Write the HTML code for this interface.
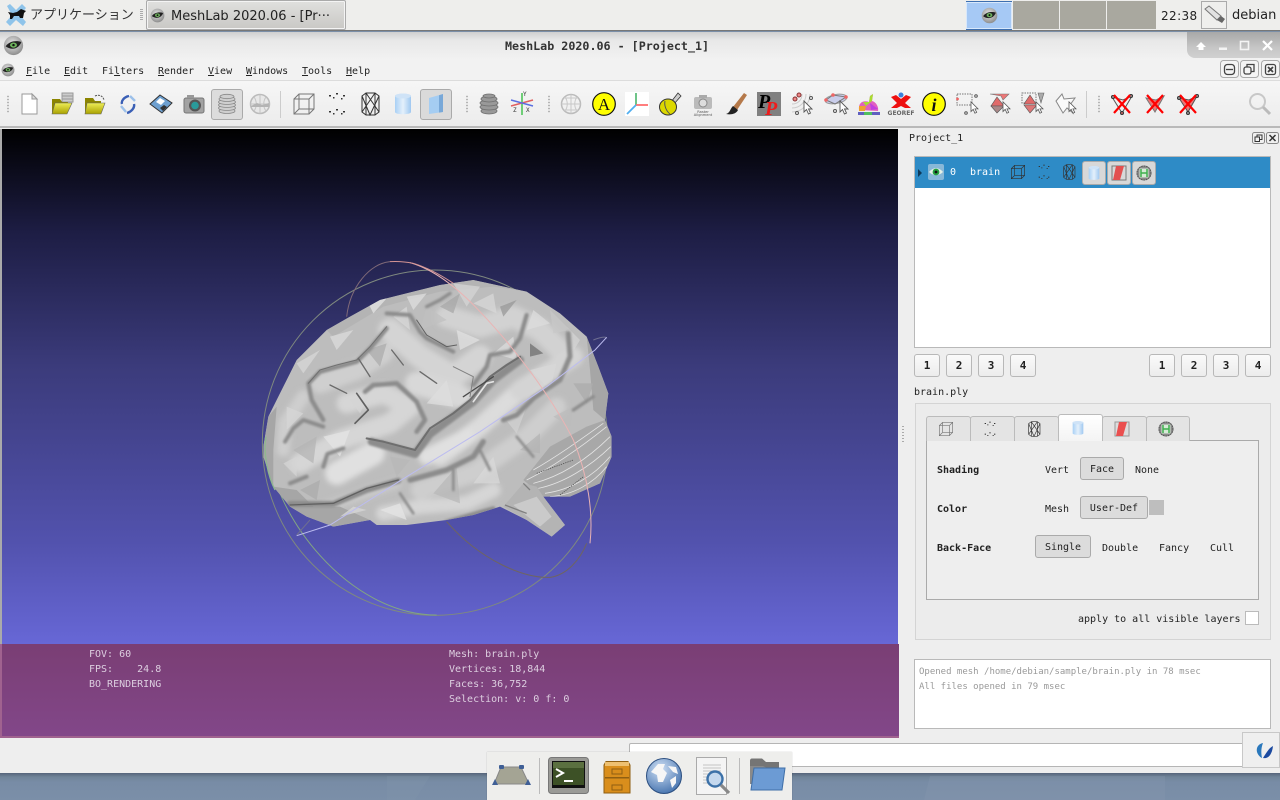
<!DOCTYPE html>
<html><head><meta charset="utf-8">
<style>
html,body{margin:0;padding:0;width:1280px;height:800px;overflow:hidden;background:#7b8fa8}
*{box-sizing:border-box}
.a{position:absolute}
.t{position:absolute;font:10px/12px "DejaVu Sans Mono","Liberation Mono",monospace;color:#222;white-space:pre}
.u{text-decoration:underline}
.b{font-weight:bold}
.btn{position:absolute;background:linear-gradient(#fafafa,#ececec);border:1px solid #b8b8b8;border-radius:3px;text-align:center;font:bold 11px/22px "DejaVu Sans Mono",monospace;color:#222}
.on{position:absolute;background:#dcdcdc;border:1px solid #aaa;border-radius:3px;text-align:center;font:10px/24px "DejaVu Sans Mono",monospace;color:#222}
.tab{position:absolute;top:416px;height:25px;background:#e4e4e4;border:1px solid #bbb;border-bottom:none;border-radius:3px 3px 0 0}
svg{position:absolute;overflow:visible}
.ic{width:24px;height:24px;top:92px}
</style></head><body>
<svg width="0" height="0" style="position:absolute">
<defs>
<radialGradient id="eg" cx=".45" cy=".4" r=".6"><stop offset="0" stop-color="#e8e8e8"/><stop offset="1" stop-color="#8e8e8e"/></radialGradient>
<linearGradient id="cy" x1="0" x2="1"><stop offset="0" stop-color="#a9d0f5"/><stop offset=".5" stop-color="#e4f0fb"/><stop offset="1" stop-color="#9fc8f0"/></linearGradient>
<linearGradient id="fo" x1="0" y1="0" x2="0" y2="1"><stop offset="0" stop-color="#eeee55"/><stop offset="1" stop-color="#a8a000"/></linearGradient>
<filter id="bl8" x="-10%" y="-10%" width="120%" height="120%"><feGaussianBlur stdDeviation="8"/></filter>
<filter id="bl3" x="-10%" y="-10%" width="120%" height="120%"><feGaussianBlur stdDeviation="3"/></filter>
<filter id="bl1" x="-10%" y="-10%" width="120%" height="120%"><feGaussianBlur stdDeviation="1"/></filter>
<symbol id="eye" viewBox="0 0 24 24"><circle cx="12" cy="12" r="11" fill="url(#eg)"/><path d="M3 13C7 7 15 6 21 8 18 16 10 18 3 13z" fill="#222"/><ellipse cx="12" cy="11.5" rx="4" ry="3" fill="#6cb05c"/><circle cx="12" cy="11.5" r="1.4" fill="#111"/></symbol>
<symbol id="cube" viewBox="0 0 24 24"><path d="M2 7H17V22H2zM2 7L7 2H22V17L17 22M17 7L22 2M7 2V17H22M7 17L2 22" fill="none" stroke="#777" stroke-width="1"/></symbol>
<symbol id="pts" viewBox="0 0 24 24"><g fill="#333"><rect x="4" y="3" width="2" height="1.5"/><rect x="11" y="1" width="2" height="1.5"/><rect x="18" y="3" width="2" height="1.5"/><rect x="8" y="5" width="1.5" height="1.5"/><rect x="16" y="6" width="1.5" height="1.5"/><rect x="4" y="19" width="2" height="1.5"/><rect x="11" y="17" width="2" height="1.5"/><rect x="18" y="19" width="2" height="1.5"/><rect x="8" y="21" width="1.5" height="1.5"/><rect x="16" y="21" width="1.5" height="1.5"/></g></symbol>
<symbol id="wire" viewBox="0 0 24 24"><path d="M4 4L8 1H17L21 4V20L17 23H8L4 20zM4 4L12 23 21 4M8 1L8 23M17 1L17 23M4 20L17 1M21 20L8 1" fill="none" stroke="#333" stroke-width="1"/></symbol>
<symbol id="cyl" viewBox="0 0 24 24"><path d="M4 4C4 1 20 1 20 4V20C20 23 4 23 4 20z" fill="url(#cy)"/><ellipse cx="12" cy="4" rx="8" ry="2.500" fill="#cfe3f7"/></symbol>
<symbol id="cur" viewBox="0 0 10 16"><path d="M1 1V12L3.5 9.5 5.5 14 7.5 13 5.5 9H9z" fill="#fff" stroke="#555" stroke-width=".9"/></symbol>
<symbol id="xm" viewBox="0 0 24 24"><path d="M4 3L20 21M20 3L4 21" stroke="#f00" stroke-width="2.2" fill="none"/></symbol>
<symbol id="tex" viewBox="0 0 16 16"><circle cx="8" cy="8" r="7.500" fill="#8a8a8a"/><circle cx="8" cy="8" r="7" fill="none" stroke="#555" stroke-dasharray="1.500 1"/><rect x="3.500" y="3.500" width="9" height="9" fill="#d6ead6"/><path d="M5 4V12M11 4V12M5 8H11" stroke="#3fb04f" stroke-width="1.500"/></symbol>
</defs></svg>

<!-- desktop -->
<div class="a" style="left:0;top:773px;width:1280px;height:27px;background:linear-gradient(#56647a 0,#708499 4px,#788ca6 9px,#7b8fa8 100%)"></div>
<svg style="left:0;top:776px" width="1280" height="24"><path d="M930 0H1165V24H924z" fill="#8899b0" opacity=".3"/><path d="M387 0H430L415 24H387z" fill="#8899b0" opacity=".2"/></svg>

<!-- taskbar -->
<div class="a" style="left:0;top:0;width:1280px;height:31px;background:#eeeeec;border-bottom:1px solid #777"></div>
<svg style="left:4px;top:3px" width="24" height="24" viewBox="0 0 24 24"><path d="M3 3L6 1 12 7 18 1 22 5 16 12 22 19 19 23 12 17 6 23 2 19 8 12z" fill="#8fc4ea"/><path d="M4 9L9 10 13 9 17 6 22 8 20 10 19 15 16 15 15 13 10 13 8 16 6 16 6 12z" fill="#111"/></svg>
<div class="t" style="left:30px;top:7px;font:13px/16px 'Liberation Sans','Noto Sans CJK JP',sans-serif;color:#333;">アプリケーション</div>
<div class="a" style="left:140px;top:9px;width:3px;height:12px;background:repeating-linear-gradient(#aaa 0 1px,transparent 1px 2px)"></div>
<div class="a" style="left:146px;top:0;width:200px;height:30px;background:linear-gradient(#e0e0de,#c9c8c5);border:1px solid #aaa;border-radius:2px;box-shadow:inset 0 0 0 1px #f4f4f4"></div>
<svg style="left:150px;top:8px" width="15" height="15"><use href="#eye"/></svg>
<div class="t" style="left:171px;top:9px;font:13px/16px 'DejaVu Sans',sans-serif;color:#222">MeshLab 2020.06 - [Pr···</div>
<div class="a" style="left:966px;top:1px;width:46px;height:29px;background:#a6c9f5;border-top:1px solid #3d6fb0;border-bottom:1px solid #3d6fb0;box-shadow:inset 0 0 0 1px #d8e8fb"></div>
<svg style="left:981px;top:7px" width="17" height="17"><use href="#eye"/></svg>
<div class="a" style="left:1013px;top:1px;width:46px;height:28px;background:#a9a89f"></div>
<div class="a" style="left:1060px;top:1px;width:46px;height:28px;background:#a9a89f"></div>
<div class="a" style="left:1107px;top:1px;width:49px;height:28px;background:#a9a89f"></div>
<div class="t" style="left:1161px;top:9px;font:12px/15px 'DejaVu Sans',sans-serif;letter-spacing:.4px">22:38</div>
<div class="a" style="left:1201px;top:1px;width:26px;height:28px;border:1px solid #aaa;background:#efefed"></div>
<svg style="left:1203px;top:4px" width="23" height="22" viewBox="0 0 23 22"><path d="M2 5L6 2 18 12 14 16z" fill="#e2e2e2" stroke="#777"/><path d="M14 16L18 12 22 15 19 19z" fill="#666"/></svg>
<div class="t" style="left:1232px;top:8px;font:13px/16px 'DejaVu Sans',sans-serif;color:#222">debian</div>

<!-- window -->
<div class="a" style="left:0;top:32px;width:1280px;height:741px;background:#eeeeee"></div>
<div class="a" style="left:0;top:32px;width:1280px;height:28px;background:linear-gradient(#cfcfcf 0,#e8e8e8 8px,#f2f2f2 100%)"></div>
<svg style="left:3px;top:35px" width="21" height="21"><use href="#eye"/></svg>
<div class="t b" style="left:505px;top:39px;font:bold 11.7px/14px 'DejaVu Sans Mono',monospace;color:#333;letter-spacing:0">MeshLab 2020.06 - [Project_1]</div>
<div class="a" style="left:1187px;top:32px;width:93px;height:26px;background:linear-gradient(#a8a8a8,#c6c6c6 60%,#d0d0d0);border-radius:0 0 0 8px"></div>
<svg style="left:1186px;top:32px" width="94" height="26"><path d="M15 10L20 15H17.500V18H12.500V15H10z" fill="#fff"/><rect x="33" y="15.500" width="8" height="2.500" fill="#f4f4f4"/><rect x="54.500" y="9.500" width="8" height="8" fill="none" stroke="#f4f4f4" stroke-width="1.600"/><path d="M77 9L86 18M86 9L77 18" stroke="#fff" stroke-width="2.200"/></svg>

<!-- MDI buttons -->
<svg style="left:1220px;top:60px;z-index:1" width="60" height="19" viewBox="0 0 60 19"><g fill="#f4f4f4" stroke="#aaa"><rect x=".5" y=".5" width="18" height="17" rx="3"/><rect x="20.500" y=".5" width="18" height="17" rx="3"/><rect x="41.500" y=".5" width="18" height="17" rx="3"/></g><g fill="none" stroke="#444" stroke-width="1.300"><rect x="4.500" y="4.500" width="10" height="10" rx="3"/><path d="M6 9.500H13"/><rect x="24" y="7" width="7" height="7" rx="2"/><path d="M27 7V4.500H34V11.500H31"/><rect x="45.500" y="4.500" width="10" height="10" rx="2"/><path d="M48 7L53 12M53 7L48 12" stroke-width="1.800"/></g></svg>

<!-- menu -->
<div class="a" style="left:0;top:60px;width:1280px;height:21px;background:#f2f2f2;border-bottom:1px solid #dcdcdc"></div>
<svg style="left:1px;top:63px;z-index:1" width="14" height="14"><use href="#eye"/></svg>
<div class="t" style="left:26px;top:66px"><span class="u">F</span>ile</div>
<div class="t" style="left:64px;top:66px"><span class="u">E</span>dit</div>
<div class="t" style="left:102px;top:66px">Fi<span class="u">l</span>ters</div>
<div class="t" style="left:158px;top:66px"><span class="u">R</span>ender</div>
<div class="t" style="left:208px;top:66px"><span class="u">V</span>iew</div>
<div class="t" style="left:246px;top:66px"><span class="u">W</span>indows</div>
<div class="t" style="left:302px;top:66px"><span class="u">T</span>ools</div>
<div class="t" style="left:346px;top:66px"><span class="u">H</span>elp</div>

<!-- toolbar -->
<div class="a" style="left:0;top:81px;width:1280px;height:47px;background:linear-gradient(#f6f6f6,#ececec);border-bottom:2px solid #b9b9b9"></div>
<div class="a" style="left:6px;top:95px;width:4px;height:18px;background:radial-gradient(circle,#aaa .7px,transparent 1px) 0 0/4px 3px"></div>
<div class="a" style="left:1097px;top:95px;width:4px;height:18px;background:radial-gradient(circle,#aaa .7px,transparent 1px) 0 0/4px 3px"></div>
<div class="a" style="left:465px;top:95px;width:4px;height:18px;background:radial-gradient(circle,#aaa .7px,transparent 1px) 0 0/4px 3px"></div>
<div class="a" style="left:547px;top:95px;width:4px;height:18px;background:radial-gradient(circle,#aaa .7px,transparent 1px) 0 0/4px 3px"></div>
<div class="a" style="left:280px;top:91px;width:1px;height:27px;background:#ccc"></div>
<div class="a" style="left:1086px;top:91px;width:1px;height:27px;background:#ccc"></div>
<div class="on" style="left:211px;top:89px;width:32px;height:31px"></div>
<div class="on" style="left:420px;top:89px;width:32px;height:31px;background:#dadada"></div>

<svg class="ic" style="left:17px" viewBox="0 0 24 24"><path d="M5 2H15L20 7V22H5z" fill="#fff" stroke="#999"/><path d="M15 2V7H20z" fill="#ddd" stroke="#999"/></svg>
<svg class="ic" style="left:50px" viewBox="0 0 24 24"><g fill="#ccc" stroke="#999"><rect x="12" y="1" width="11" height="3"/><rect x="12" y="4" width="11" height="3"/><rect x="12" y="7" width="11" height="3"/></g><path d="M2 7H10L12 10H18L16 22H2z" fill="#8c8500"/><path d="M5 11H22L17 22H2z" fill="url(#fo)" stroke="#666" stroke-width=".6"/></svg>
<svg class="ic" style="left:83px" viewBox="0 0 24 24"><path d="M2 6H10L12 9H18V22H2z" fill="#8c8500"/><path d="M4 11H22L18 22H2z" fill="url(#fo)" stroke="#666" stroke-width=".6"/><path d="M12 4C16 2 20 4 21 8" fill="none" stroke="#555" stroke-dasharray="2 1"/></svg>
<svg class="ic" style="left:116px" viewBox="0 0 24 24"><path d="M6 12C5 9 8 5 13 4" fill="none" stroke="#3a5fb5" stroke-width="2.400"/><path d="M14 4L19 9" stroke="#9cc0ea" stroke-width="2.400"/><path d="M18 12C19 16 15 20 11 21" fill="none" stroke="#3a5fb5" stroke-width="2.400"/><path d="M5 14L10 20" stroke="#9cc0ea" stroke-width="2.400"/></svg>
<svg class="ic" style="left:149px" viewBox="0 0 24 24"><path d="M1 12L11 3 23 11 13 21z" fill="#6ea0d0" stroke="#333"/><path d="M7 10L11 6 16 9 12 13z" fill="#fff"/><path d="M11 16L15 13 18 15 14 19z" fill="#333"/></svg>
<svg class="ic" style="left:182px" viewBox="0 0 24 24"><rect x="2" y="6" width="20" height="15" rx="2" fill="#a2a2a2" stroke="#777"/><rect x="5" y="3" width="7" height="3" fill="#999"/><circle cx="13" cy="13.500" r="6" fill="#555"/><circle cx="13" cy="13.500" r="3.800" fill="#2a9a9a"/></svg>
<svg class="ic" style="left:215px" viewBox="0 0 24 24"><g fill="#cfcfcf" stroke="#888" stroke-width=".8"><ellipse cx="12" cy="19" rx="8" ry="2.500"/><ellipse cx="12" cy="16" rx="8.500" ry="2.500"/><ellipse cx="12" cy="13" rx="8.500" ry="2.500"/><ellipse cx="12" cy="10" rx="8.500" ry="2.500"/><ellipse cx="12" cy="7" rx="8" ry="2.500"/><ellipse cx="12" cy="4.500" rx="7" ry="2.200"/></g></svg>
<svg class="ic" style="left:248px" viewBox="0 0 24 24"><circle cx="12" cy="12" r="9.500" fill="#e8e8e8" stroke="#bbb" stroke-width="1.500"/><path d="M2.500 12H21.500M12 2.500V21.500M6 5C9 9 9 15 6 19M18 5C15 9 15 15 18 19" stroke="#c4c4c4" fill="none"/><path d="M3 14L9 11 14 13 21 11V15H3z" fill="#b4b4b4"/></svg>
<svg class="ic" style="left:292px"><use href="#cube" width="24" height="24"/></svg>
<svg class="ic" style="left:325px"><use href="#pts" width="24" height="24"/></svg>
<svg class="ic" style="left:358px"><use href="#wire" width="24" height="24"/></svg>
<svg class="ic" style="left:391px"><use href="#cyl" width="24" height="24"/></svg>
<svg class="ic" style="left:424px" viewBox="0 0 24 24"><path d="M5 6L19 2V20L5 22z" fill="#a5cdf2"/><path d="M19 2V20L15 20.600V3.200z" fill="#78a8d8"/></svg>
<svg class="ic" style="left:477px" viewBox="0 0 24 24"><g fill="#999" stroke="#6e6e6e" stroke-width=".8"><ellipse cx="12" cy="19" rx="8" ry="3"/><ellipse cx="12" cy="15" rx="9" ry="3"/><ellipse cx="12" cy="11" rx="9" ry="3"/><ellipse cx="12" cy="7" rx="8" ry="3"/><ellipse cx="12" cy="4" rx="6" ry="2"/></g></svg>
<svg class="ic" style="left:510px" viewBox="0 0 24 24"><path d="M12 1V23" stroke="#6fce78" stroke-width="2"/><path d="M1 14L23 8" stroke="#e06060" stroke-width="1.500"/><path d="M1 8L23 14" stroke="#5a6fe0" stroke-width="1.500"/><g fill="#333" font-size="6" font-family="DejaVu Sans Mono"><text x="13" y="4">Y</text><text x="3" y="20">Z</text><text x="16" y="20">X</text></g></svg>
<svg class="ic" style="left:559px" viewBox="0 0 24 24"><circle cx="12" cy="12" r="9.500" fill="none" stroke="#bbb" stroke-width="1.500"/><path d="M2.500 12H21.500M12 2.500V21.500M6 5C9 9 9 15 6 19M18 5C15 9 15 15 18 19M5 6H19M5 18H19" stroke="#c8c8c8" fill="none"/></svg>
<svg class="ic" style="left:592px" viewBox="0 0 24 24"><circle cx="12" cy="12" r="11.300" fill="#ffff00" stroke="#111" stroke-width="1.200"/><text x="12" y="18" text-anchor="middle" font-family="Liberation Serif,serif" font-size="17" fill="#111">A</text></svg>
<svg class="ic" style="left:625px" viewBox="0 0 24 24"><rect width="24" height="24" fill="#fff"/><path d="M11 13V1" stroke="#3fb060" stroke-width="1.500"/><path d="M11 13H23" stroke="#ff7070" stroke-width="1.800"/><path d="M11 13L2 22" stroke="#50aef0" stroke-width="1.800"/></svg>
<svg class="ic" style="left:658px" viewBox="0 0 24 24"><path d="M13 10L20 1 23 4 16 12z" fill="#ccc" stroke="#333" stroke-width=".8"/><ellipse cx="10" cy="15" rx="8.500" ry="8" fill="#dcd800" stroke="#333"/><path d="M7 9C6 13 8 19 12 22" stroke="#555" fill="none"/></svg>
<svg class="ic" style="left:691px" viewBox="0 0 24 24"><rect x="3" y="5" width="18" height="12" rx="2" fill="#bbb"/><rect x="8" y="3" width="8" height="3" fill="#aaa"/><circle cx="12" cy="11" r="4" fill="#ddd" stroke="#888"/><text x="12" y="21" text-anchor="middle" font-size="3.600" fill="#555" font-family="DejaVu Sans">Raster</text><text x="12" y="24" text-anchor="middle" font-size="3.600" fill="#555" font-family="DejaVu Sans">Alignment</text></svg>
<svg class="ic" style="left:724px" viewBox="0 0 24 24"><path d="M9 15L20 1 23 3 13 18z" fill="#b5794a"/><path d="M9 14L14 18C12 22 7 23 2 22 6 21 6 17 9 14z" fill="#222"/></svg>
<svg class="ic" style="left:757px" viewBox="0 0 24 24"><rect width="24" height="24" fill="#808080"/><text x="1" y="16" font-family="Liberation Serif,serif" font-weight="bold" font-style="italic" font-size="20" fill="#000">P</text><text x="8" y="23" font-family="Liberation Serif,serif" font-weight="bold" font-style="italic" font-size="20" fill="#ee1c1c">P</text></svg>
<svg class="ic" style="left:790px" viewBox="0 0 24 24"><path d="M2 12C8 12 12 8 12 2M2 16C10 16 16 10 16 2M2 20C12 20 20 12 20 2" stroke="#ccc" fill="none"/><circle cx="5" cy="7" r="2" fill="#e88" stroke="#833"/><circle cx="9" cy="3" r="2" fill="#e88" stroke="#833"/><circle cx="21" cy="6" r="1.500" fill="none" stroke="#555"/><circle cx="7" cy="21" r="1.500" fill="none" stroke="#555"/><use href="#cur" x="13" y="8" width="10" height="16"/></svg>
<svg class="ic" style="left:823px" viewBox="0 0 24 24"><ellipse cx="13" cy="7" rx="11" ry="4.500" fill="#c9cdea" stroke="#999" transform="rotate(-10 13 7)"/><path d="M3 8L10 3 23 5 12 12z" fill="none" stroke="#777"/><circle cx="3" cy="8" r="1.800" fill="#e66"/><circle cx="10" cy="3" r="1.800" fill="#e66"/><circle cx="23" cy="5" r="1.800" fill="#e66"/><circle cx="12" cy="19" r="1.500" fill="none" stroke="#555"/><use href="#cur" x="16" y="8" width="10" height="16"/></svg>
<svg class="ic" style="left:856px" viewBox="0 0 24 24"><path d="M3 18C2 10 8 8 13 10L14 4 17 2 16 9C20 10 23 15 22 19z" fill="#e060c0"/><path d="M7 10L13 10 14 4 17 2 16 9 10 14z" fill="#a8dc30"/><path d="M14 11L22 17 15 18z" fill="#c040e0"/><path d="M3 14L10 14 9 19H3z" fill="#f0a030"/><rect x="2" y="20" width="22" height="3" fill="#6060c0"/><rect x="8" y="20" width="8" height="3" fill="#50c060"/></svg>
<svg class="ic" style="left:889px" viewBox="0 0 24 24"><path d="M2 5L7 3 12 7 17 3 22 5 16 11 22 16H16L12 14 8 16H2L8 11z" fill="#ee1010"/><circle cx="12" cy="3" r="2.500" fill="#3a7fdc"/><text x="12" y="23" text-anchor="middle" font-size="6" font-weight="bold" fill="#666" font-family="DejaVu Sans">GEOREF</text></svg>
<svg class="ic" style="left:922px" viewBox="0 0 24 24"><circle cx="12" cy="12" r="11.300" fill="#ffff00" stroke="#111" stroke-width="1.200"/><text x="12" y="19" text-anchor="middle" font-family="Liberation Serif,serif" font-weight="bold" font-style="italic" font-size="18" fill="#111">i</text></svg>
<svg class="ic" style="left:955px" viewBox="0 0 24 24"><rect x="2" y="2" width="15" height="11" fill="none" stroke="#777" stroke-dasharray="1.500 1"/><circle cx="2.500" cy="7" r="1.400" fill="#e66"/><circle cx="21" cy="4" r="1.300" fill="none" stroke="#555"/><circle cx="11" cy="21" r="1.300" fill="none" stroke="#555"/><use href="#cur" x="15" y="9" width="9" height="14"/></svg>
<svg class="ic" style="left:988px" viewBox="0 0 24 24"><path d="M2 2H21L15 8 13 4z" fill="#e77" stroke="#777" stroke-width=".6"/><path d="M9 5L16 14H3z" fill="#e06a6a" stroke="#555" stroke-width=".6"/><path d="M3 14H16L9 21z" fill="#a88" stroke="#555" stroke-width=".6"/><use href="#cur" x="14" y="9" width="9" height="14"/></svg>
<svg class="ic" style="left:1021px" viewBox="0 0 24 24"><rect x="1" y="1" width="14" height="10" fill="none" stroke="#777" stroke-dasharray="1.500 1"/><path d="M17 1H23L20 11z" fill="#aaa" stroke="#666" stroke-width=".6"/><path d="M9 3L15 12H3z" fill="#e06a6a" stroke="#555" stroke-width=".6"/><path d="M3 13H16L9 21z" fill="#d77" stroke="#555" stroke-width=".6"/><use href="#cur" x="14" y="9" width="9" height="14"/></svg>
<svg class="ic" style="left:1054px" viewBox="0 0 24 24"><path d="M2 9L8 2 10 7 21 6 16 13 19 21 13 16 9 21z" fill="#fafafa" stroke="#888"/><use href="#cur" x="14" y="9" width="9" height="14"/></svg>
<svg class="ic" style="left:1110px" viewBox="0 0 24 24"><path d="M2 5L13 8 22 4 12 21z" fill="none" stroke="#555"/><circle cx="3" cy="5" r="1.500" fill="#999" stroke="#333"/><circle cx="21" cy="4" r="1.500" fill="#999" stroke="#333"/><circle cx="12" cy="21" r="1.500" fill="#c66" stroke="#333"/><use href="#xm" width="24" height="24"/></svg>
<svg class="ic" style="left:1143px" viewBox="0 0 24 24"><path d="M3 6L13 8 21 4 12 20z" fill="#e77" stroke="#777"/><use href="#xm" width="24" height="24"/></svg>
<svg class="ic" style="left:1176px" viewBox="0 0 24 24"><path d="M3 6L13 8 21 4 12 20z" fill="#e77" stroke="#555"/><circle cx="3" cy="6" r="1.500" fill="#999" stroke="#333"/><circle cx="21" cy="4" r="1.500" fill="#999" stroke="#333"/><circle cx="12" cy="21" r="1.500" fill="#999" stroke="#333"/><use href="#xm" width="24" height="24"/></svg>
<svg class="ic" style="left:1248px" viewBox="0 0 24 24"><circle cx="9.500" cy="9.500" r="7.500" fill="none" stroke="#c8c8c8" stroke-width="2"/><path d="M15 15L22 22" stroke="#bbb" stroke-width="3"/></svg>

<!-- viewport -->
<div class="a" style="left:1px;top:129px;width:897px;height:515px;background:linear-gradient(#000 0,#1d1d44 20%,#3b3b7b 46%,#5252ad 80%,#6767d6 100%)"></div>
<div class="a" style="left:0;top:129px;width:2px;height:609px;background:#aaa"></div>
<svg style="left:240px;top:250px" width="400" height="370" viewBox="0 0 1200 1110">
<defs><clipPath id="bc"><path d="M70 590L85 500 130 410 170 330 260 240 330 200 420 150 520 125 600 105 700 90 860 125 960 190 1040 260 1075 350 1105 430 1095 510 1115 560 1115 620 1080 700 990 740 910 740 975 825 935 860 860 810 780 770 700 795 620 810 500 825 410 825 390 810 280 830 200 800 150 770 100 710 70 620z"/></clipPath></defs>
<!-- back rings -->
<circle cx="585" cy="578" r="518" fill="none" stroke="#7f897f" stroke-width="3"/>
<path d="M78 560C90 800 330 1095 590 1095" fill="none" stroke="#82a582" stroke-width="3"/>
<path d="M320 200C330 110 390 40 450 35" fill="none" stroke="#806a78" stroke-width="3"/>
<path d="M620 815C720 930 850 985 930 982 980 975 1020 930 1040 880" fill="none" stroke="#6f6560" stroke-width="3"/>
<path d="M170 855L210 810M1060 270C1080 262 1100 258 1100 265" fill="none" stroke="#6e6e90" stroke-width="3"/>
<!-- brain -->
<g clip-path="url(#bc)">
<rect x="50" y="70" width="1100" height="800" fill="#bdbdbd"/>
<!-- gyri highlight -->
<g fill="none" stroke-linecap="round" stroke-linejoin="round" filter="url(#bl8)">
<path d="M180 640L300 570 450 520 510 470 430 430 320 460" stroke="#d6d6d6" stroke-width="60"/>
<path d="M600 620L720 530 830 430 900 400" stroke="#dcdcdc" stroke-width="56"/>
<path d="M450 240L540 320 640 380 720 320" stroke="#d4d4d4" stroke-width="70"/>
<path d="M620 200L720 230 820 200 900 240 960 300" stroke="#d2d2d2" stroke-width="66"/>
<path d="M240 400L350 360 430 310" stroke="#cfcfcf" stroke-width="60"/>
<path d="M130 600L135 520 190 440" stroke="#cecece" stroke-width="40"/>
<path d="M540 720L700 670 860 560 950 470" stroke="#cecece" stroke-width="56"/>
<path d="M430 790L540 770 680 760 760 720" stroke="#d6d6d6" stroke-width="44"/>
<path d="M230 780L380 730 470 700" stroke="#cacaca" stroke-width="30"/>
<path d="M290 670L400 610" stroke="#e0e0e0" stroke-width="70"/>
<path d="M560 620L680 560" stroke="#e0e0e0" stroke-width="50"/>
<path d="M530 400L660 440" stroke="#d8d8d8" stroke-width="70"/>
<path d="M840 420L1000 320" stroke="#d4d4d4" stroke-width="60"/>
</g>
<!-- dark side edges -->
<path d="M1040 260L1075 350 1105 430 1095 510 1060 480 1050 360zM70 590L85 500 110 470 100 600 100 710 70 620z" fill="#a6a6a6"/>
<path d="M100 710L150 770 200 800 280 830 390 810 300 770 220 770 170 720z" fill="#a6a6a6"/>
<path d="M260 240L420 150 600 105 700 90 860 125 760 110 600 125 430 170 280 260z" fill="#b4b4b4"/>
<!-- facets -->
<g opacity=".75">
<path d="M380 150L440 145 400 190z" fill="#e6e6e6"/><path d="M500 140L560 130 520 180z" fill="#dfdfdf"/><path d="M270 260L340 240 290 300z" fill="#dcdcdc"/><path d="M170 340L240 300 190 370z" fill="#d8d8d8"/><path d="M650 240L720 270 660 300z" fill="#e2e2e2"/><path d="M640 100L720 110 680 170z" fill="#d6d6d6"/><path d="M870 280L910 310 870 320z" fill="#707070"/><path d="M780 170L830 150 790 200z" fill="#989898"/><path d="M250 560L330 540 300 620z" fill="#e4e4e4"/><path d="M160 600L230 560 220 640z" fill="#b4b4b4"/><path d="M140 470L190 490 140 540z" fill="#d6d6d6"/><path d="M600 170L660 130 640 190z" fill="#a8a8a8"/><path d="M980 230L1020 270 990 320z" fill="#d4d4d4"/><path d="M930 180L990 240 940 250z" fill="#c8c8c8"/><path d="M1000 400L1060 400 1040 460z" fill="#acacac"/><path d="M700 700L760 620 780 700z" fill="#d8d8d8"/><path d="M580 730L650 650 660 760z" fill="#b8b8b8"/><path d="M420 780L480 760 500 810z" fill="#e4e4e4"/><path d="M840 600L900 550 900 610z" fill="#b4b4b4"/><path d="M300 800L340 770 380 780z" fill="#d8d8d8"/><path d="M180 720L240 690 230 750z" fill="#acacac"/><path d="M380 300L440 280 420 350z" fill="#acacac"/><path d="M760 310L820 260 830 330z" fill="#dcdcdc"/><path d="M870 360L950 340 930 420z" fill="#d8d8d8"/><path d="M460 200L500 170 510 240z" fill="#d8d8d8"/><path d="M560 170L620 210 540 240z" fill="#c0c0c0"/><path d="M560 460L620 390 640 470z" fill="#dedede"/>
<path d="M700 160L760 130 770 190z" fill="#d8d8d8"/><path d="M880 180L930 220 860 240z" fill="#dcdcdc"/><path d="M130 640L170 620 170 680z" fill="#d4d4d4"/><path d="M330 450L390 430 360 490z" fill="#d4d4d4"/><path d="M450 620L510 630 470 680z" fill="#b8b8b8"/><path d="M790 500L860 470 830 550z" fill="#d2d2d2"/><path d="M940 500L1000 470 990 530z" fill="#bcbcbc"/>
</g>
<!-- soft fold shadows -->
<g fill="none" stroke-linecap="round" stroke-linejoin="round" filter="url(#bl3)" stroke="#8c8c8c">
<path d="M395 575L525 612 570 552 640 500 700 455 760 390 840 330" stroke-width="24"/>
<path d="M510 690L620 660 700 620 730 575" stroke-width="16"/>
<path d="M205 400L215 450 250 510M205 400L240 365 350 335 395 290 440 235" stroke-width="13"/>
<path d="M375 425L400 405 470 400 530 455 555 510 530 545" stroke-width="14"/>
<path d="M440 190L510 195 540 245 560 265 640 305" stroke-width="12"/>
<path d="M985 250L990 320 960 390 880 445 830 495 790 510" stroke-width="15"/>
<path d="M860 195L840 265 810 305 750 315 740 350 700 405" stroke-width="13"/>
<path d="M150 762L280 762 380 720 475 692" stroke-width="18"/>
<path d="M135 575L160 535 190 510 250 530M250 650L262 612 310 595" stroke-width="12"/>
<path d="M150 700L200 680M620 815L760 775" stroke-width="12"/>
<path d="M560 170L600 150 630 130M1000 480L1060 440" stroke-width="10"/>
<path d="M480 730L520 790M640 660L640 720M720 600L750 660M830 560L880 620" stroke-width="8"/>
</g>
<!-- sharp sulci -->
<g fill="none" stroke-linecap="round" stroke-linejoin="round" filter="url(#bl1)">
<path d="M380 565L430 575 525 600 570 535 640 490 690 450 750 380 800 345 840 320" stroke="#6e6e6e" stroke-width="6"/>
<path d="M670 440L700 420 760 380" stroke="#4a4a4a" stroke-width="4"/>
<path d="M700 455L740 400 760 395" stroke="#e4e4e4" stroke-width="5"/>
<path d="M205 400L240 360 290 345 350 330 390 290 440 230" stroke="#707070" stroke-width="3"/>
<path d="M270 405L320 430M355 325L390 380M540 365L590 400M455 300L490 345" stroke="#6a6a6a" stroke-width="4"/>
<path d="M350 430L385 480 345 520" stroke="#606060" stroke-width="5"/>
<path d="M530 210L560 255 620 290 650 285" stroke="#606060" stroke-width="3"/>
<path d="M640 350L700 380 690 440" stroke="#808080" stroke-width="3"/>
<path d="M150 765L280 760 380 715 475 690" stroke="#606060" stroke-width="4"/>
</g>
<!-- cerebellum -->
<path d="M850 690L930 590 1040 530 1095 510 1115 560 1115 620 1080 700 990 740 910 740z" fill="#a8a8a8"/>
<g fill="none" stroke="#e4e4e4" stroke-width="2.400">
<path d="M860 690C920 660 1000 610 1100 530"/><path d="M880 700C960 680 1040 630 1110 560"/><path d="M895 715C970 700 1050 650 1112 590"/><path d="M915 730C990 720 1060 680 1110 620"/><path d="M880 660C950 620 1020 570 1090 520"/><path d="M930 740C1000 735 1060 700 1100 650"/>
</g>
<path d="M890 670L1000 630M960 735L1030 680" stroke="#444" stroke-width="2" fill="none" stroke-dasharray="4 3"/>
<!-- stem -->
<path d="M850 700L890 710 910 740 975 825 935 860 860 810 790 770z" fill="#b4b4b4"/>
<path d="M820 765L890 740 935 800 900 830z" fill="#cacaca"/>
<path d="M795 765L860 790M850 700L870 720" stroke="#808080" stroke-width="4" fill="none"/>
</g>
<!-- front rings -->
<path d="M510 38C570 55 640 100 720 185 830 300 940 450 1000 570 1045 680 1060 790 1050 880" fill="none" stroke="#eab4b4" stroke-width="3"/>
<path d="M450 35C480 33 500 36 520 40 570 55 610 80 640 100" fill="none" stroke="#d49494" stroke-width="3"/>
<path d="M170 857L270 825 500 680 720 545 920 410 1065 300 1100 262" fill="none" stroke="#bcbcf0" stroke-width="3"/>
<path d="M78 560C68 610 85 680 105 720" fill="none" stroke="#8fb78f" stroke-width="4"/>
</svg>

<!-- overlay -->
<div class="a" style="left:0;top:644px;width:899px;height:94px;background:linear-gradient(#7a3e74,#824789);border-left:2px solid #a0628f;border-bottom:2px solid #a0628f"></div>
<div class="t" style="left:89px;top:647px;color:#ddcfe0;line-height:15px">FOV: 60
FPS:    24.8
BO_RENDERING</div>
<div class="t" style="left:449px;top:647px;color:#ddcfe0;line-height:15px">Mesh: brain.ply
Vertices: 18,844
Faces: 36,752
Selection: v: 0 f: 0</div>

<!-- right panel -->
<div class="t" style="left:909px;top:132px;line-height:14px">Project_1</div>
<svg style="left:1252px;top:132px" width="27" height="12" viewBox="0 0 27 12"><g fill="#f0f0f0" stroke="#888"><rect x=".5" y=".5" width="12" height="11" rx="2"/><rect x="14.500" y=".5" width="12" height="11" rx="2"/></g><g fill="none" stroke="#333"><rect x="3" y="5" width="4.500" height="4.500"/><path d="M5 5V3H10V7.500H7.500"/><path d="M17.500 3L23.500 9M23.500 3L17.500 9" stroke-width="1.500"/></g></svg>
<div class="a" style="left:914px;top:156px;width:357px;height:192px;background:#fff;border:1px solid #b9b9b9"></div>
<div class="a" style="left:915px;top:157px;width:355px;height:31px;background:#2e8bc6"></div>
<svg style="left:917px;top:168px" width="6" height="10"><path d="M1 1L5 5 1 9z" fill="#0e3a5a"/></svg>
<div class="a" style="left:928px;top:164px;width:16px;height:16px;background:#88b8d8;border-radius:2px"></div>
<svg style="left:928px;top:164px" width="16" height="16" viewBox="0 0 16 16"><path d="M1 8C5 3 11 3 15 8 11 12 5 12 1 8z" fill="#e6f0e6"/><circle cx="8" cy="8" r="3.400" fill="#22a040"/><circle cx="8" cy="8" r="1.400" fill="#111"/></svg>
<div class="t" style="left:950px;top:167px;color:#fff">0</div>
<div class="t" style="left:970px;top:167px;color:#fff">brain</div>
<svg style="left:1010px;top:164px;filter:brightness(.4)" width="16" height="16"><use href="#cube" width="16" height="16"/></svg>
<svg style="left:1036px;top:164px" width="16" height="16"><use href="#pts" width="16" height="16"/></svg>
<svg style="left:1061px;top:164px" width="16" height="16"><use href="#wire" width="16" height="16"/></svg>
<div class="on" style="left:1082px;top:161px;width:24px;height:24px;background:#d8d8d8"></div>
<div class="on" style="left:1107px;top:161px;width:24px;height:24px;background:#d8d8d8"></div>
<div class="on" style="left:1132px;top:161px;width:24px;height:24px;background:#d8d8d8"></div>
<svg style="left:1086px;top:165px" width="16" height="16"><use href="#cyl" width="16" height="16"/></svg>
<svg style="left:1111px;top:165px" width="16" height="16" viewBox="0 0 16 16"><rect x="1" y="1" width="14" height="14" fill="#d8d8d8" stroke="#777"/><path d="M5 1H13L9 15H2z" fill="#e25050"/></svg>
<svg style="left:1136px;top:165px" width="16" height="16"><use href="#tex" width="16" height="16"/></svg>

<div class="btn" style="left:914px;top:354px;width:26px;height:23px">1</div>
<div class="btn" style="left:946px;top:354px;width:26px;height:23px">2</div>
<div class="btn" style="left:978px;top:354px;width:26px;height:23px">3</div>
<div class="btn" style="left:1010px;top:354px;width:26px;height:23px">4</div>
<div class="btn" style="left:1149px;top:354px;width:26px;height:23px">1</div>
<div class="btn" style="left:1181px;top:354px;width:26px;height:23px">2</div>
<div class="btn" style="left:1213px;top:354px;width:26px;height:23px">3</div>
<div class="btn" style="left:1245px;top:354px;width:26px;height:23px">4</div>

<div class="t" style="left:914px;top:387px">brain.ply</div>
<div class="a" style="left:915px;top:403px;width:356px;height:237px;border:1px solid #d4d4d4;background:#ececec"></div>
<div class="a" style="left:902px;top:426px;width:2px;height:16px;background:repeating-linear-gradient(#aaa 0 1px,transparent 1px 3px)"></div>

<div class="a" style="left:926px;top:440px;width:333px;height:160px;background:#eeeeee;border:1px solid #aaa"></div>
<div class="tab" style="left:926px;width:45px"></div>
<div class="tab" style="left:970px;width:45px"></div>
<div class="tab" style="left:1014px;width:45px"></div>
<div class="tab" style="left:1102px;width:45px"></div>
<div class="tab" style="left:1146px;width:44px"></div>
<div class="tab" style="left:1058px;top:414px;width:45px;height:27px;background:linear-gradient(#fff,#f4f4f4)"></div>
<svg style="left:938px;top:421px" width="16" height="16"><use href="#cube" width="16" height="16"/></svg>
<svg style="left:982px;top:421px" width="16" height="16"><use href="#pts" width="16" height="16"/></svg>
<svg style="left:1026px;top:421px" width="16" height="16"><use href="#wire" width="16" height="16"/></svg>
<svg style="left:1070px;top:420px" width="16" height="16"><use href="#cyl" width="16" height="16"/></svg>
<svg style="left:1114px;top:421px" width="16" height="16" viewBox="0 0 16 16"><rect x="1" y="1" width="14" height="14" fill="#ddd" stroke="#999"/><path d="M5 1H13L9 15H2z" fill="#ea5050"/></svg>
<svg style="left:1158px;top:421px" width="16" height="16"><use href="#tex" width="16" height="16"/></svg>

<div class="t b" style="left:937px;top:465px">Shading</div>
<div class="t" style="left:1045px;top:465px">Vert</div>
<div class="on" style="left:1080px;top:457px;width:44px;height:23px">Face</div>
<div class="t" style="left:1135px;top:465px">None</div>
<div class="t b" style="left:937px;top:504px">Color</div>
<div class="t" style="left:1045px;top:504px">Mesh</div>
<div class="on" style="left:1080px;top:496px;width:68px;height:23px">User-Def</div>
<div class="a" style="left:1149px;top:500px;width:15px;height:15px;background:#bebebe"></div>
<div class="t b" style="left:937px;top:543px">Back-Face</div>
<div class="on" style="left:1035px;top:535px;width:56px;height:23px">Single</div>
<div class="t" style="left:1102px;top:543px">Double</div>
<div class="t" style="left:1159px;top:543px">Fancy</div>
<div class="t" style="left:1210px;top:543px">Cull</div>
<div class="t" style="left:1078px;top:614px">apply to all visible layers</div>
<div class="a" style="left:1245px;top:611px;width:14px;height:14px;background:#fff;border:1px solid #bbb"></div>

<div class="a" style="left:914px;top:659px;width:357px;height:70px;background:#fff;border:1px solid #b9b9b9"></div>
<div class="t" style="left:919px;top:666px;font-size:9px;color:#999">Opened mesh /home/debian/sample/brain.ply in 78 msec</div>
<div class="t" style="left:919px;top:681px;font-size:9px;color:#999">All files opened in 79 msec</div>

<!-- status -->
<div class="a" style="left:629px;top:743px;width:620px;height:24px;background:#fff;border:1px solid #b5b5b5;border-radius:2px 0 0 2px"></div>
<div class="a" style="left:1242px;top:732px;width:38px;height:36px;background:#efefef;border:1px solid #c8c8c8"></div>
<svg style="left:1256px;top:743px" width="18" height="16" viewBox="0 0 18 16"><path d="M7 0C2 1 0 5 1 9 2 12 4 14 6 15 5 10 5 5 7 0z" fill="#2a78bc"/><path d="M17 3C13 5 11 9 7 15 12 16 16 12 17 3z" fill="#1c4aa0"/></svg>

<!-- dock -->
<div class="a" style="left:487px;top:752px;width:305px;height:48px;background:#eeeeec;box-shadow:0 0 1px rgba(0,0,0,.25)"></div>
<svg style="left:492px;top:764px" width="40" height="24" viewBox="0 0 40 24"><path d="M9 3H29L37 20H2z" fill="#a4a494" stroke="#888"/><g fill="#3f5f96"><rect x="7" y="1" width="5" height="4" rx="1"/><rect x="27" y="1" width="5" height="4" rx="1"/><path d="M0 21L3 15 6 21z"/><path d="M33 21L36 15 39 21z"/></g></svg>
<div class="a" style="left:539px;top:758px;width:1px;height:36px;background:#bbb"></div>
<div class="a" style="left:739px;top:758px;width:1px;height:36px;background:#bbb"></div>
<svg style="left:548px;top:757px" width="41" height="37" viewBox="0 0 41 37"><rect x=".5" y=".5" width="40" height="36" rx="3" fill="#9a9a96" stroke="#777"/><rect x="4" y="4" width="33" height="27" fill="#111"/><rect x="5" y="5" width="31" height="23" fill="#3d5126"/><rect x="5" y="5" width="31" height="6" fill="#5b7040"/><path d="M8 12L15 16 8 20" stroke="#fff" stroke-width="2" fill="none"/><rect x="16" y="23" width="9" height="2" fill="#fff"/></svg>
<svg style="left:603px;top:761px" width="28" height="33" viewBox="0 0 28 33"><path d="M3 .5H25L27 4V32H1V4z" fill="#d98e1c" stroke="#8f5f12"/><rect x="2" y="1" width="24" height="4" fill="#eec070"/><rect x="2" y="16" width="24" height="1.500" fill="#8f5f12"/><rect x="9" y="8" width="10" height="5" fill="none" stroke="#8f5f12"/><rect x="9" y="24" width="10" height="5" fill="none" stroke="#8f5f12"/></svg>
<svg style="left:646px;top:758px" width="36" height="36" viewBox="0 0 36 36"><defs><radialGradient id="gl" cx=".4" cy=".3" r=".8"><stop offset="0" stop-color="#cfe0f5"/><stop offset="1" stop-color="#3a6aa8"/></radialGradient></defs><circle cx="18" cy="18" r="17.500" fill="url(#gl)" stroke="#2c4f80"/><path d="M5 14L12 6 19 6 17 11 21 15 17 24 12 24 11 17zM22 8L30 9 32 16 27 14zM24 22L30 18 30 25 26 30z" fill="#f6f6f6"/></svg>
<svg style="left:696px;top:757px" width="38" height="40" viewBox="0 0 38 40"><rect x=".5" y=".5" width="30" height="37" fill="#f4f4f4" stroke="#aaa"/><g stroke="#c4c4c4"><path d="M7 8H25M7 11H25M7 14H25M7 17H25M7 20H14M7 23H14M7 26H14"/></g><circle cx="19" cy="22" r="7.500" fill="#c4d8ee" stroke="#3c71a8" stroke-width="2.400"/><path d="M25 28L33 36" stroke="#888" stroke-width="3.200"/></svg>
<svg style="left:749px;top:758px" width="38" height="34" viewBox="0 0 38 34"><path d="M1 3C1 1 2 .5 3 .5H13L17 4H30V10H1z" fill="#757575"/><path d="M1 8H14L18 10H30V26H1z" fill="#8a8a8a"/><path d="M5 10H36L33 32H2z" fill="#6c9bd4" stroke="#3f6fa8"/></svg>
</body></html>
